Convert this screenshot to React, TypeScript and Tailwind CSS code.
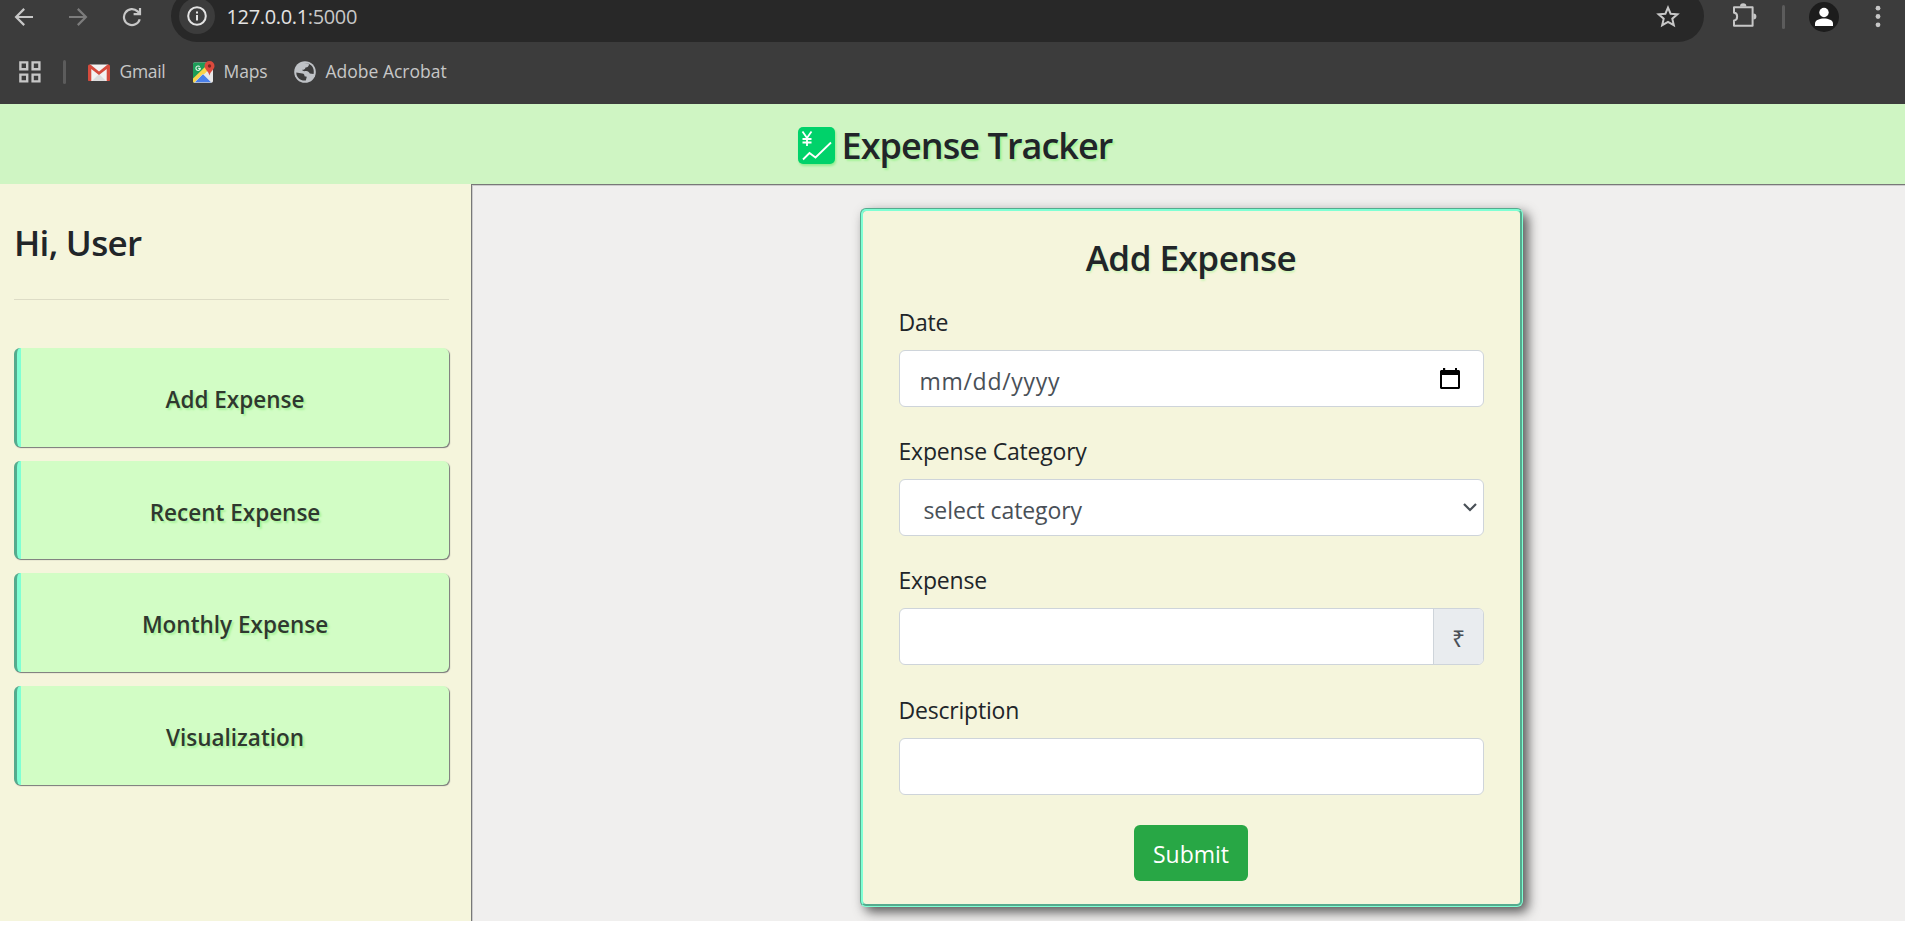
import type { ReactNode } from "react";

function ArrowIcon({ flip = false, color }: { flip?: boolean; color: string }) {
  return (
    <svg width="20" height="20" viewBox="0 0 20 20" fill="none" stroke={color} strokeWidth="2.2" className={flip ? "-scale-x-100" : ""}>
      <path d="M19 10H2.6M10.2 1.9 2.1 10l8.1 8.1" />
    </svg>
  );
}

function BrowserBar() {
  return (
    <div className="flex h-[104px] flex-col overflow-hidden bg-[#3c3c3c]">
      <div className="flex h-[42px] items-start">
        <div className="flex w-[171px] gap-[34px] pt-[6.500px] pl-[14px]">
          <ArrowIcon color="#c7c7c7" />
          <ArrowIcon flip color="#7c7c7c" />
          <svg width="20" height="20" viewBox="0 0 20 20" fill="none" stroke="#c7c7c7" strokeWidth="2.2">
            <path d="M17.7 12.2A8 8 0 1 1 15.600 4.400l2 2" />
            <path d="M18 .9v6.3h-6.4" />
          </svg>
        </div>
        <div className="-mt-[10px] flex h-[52px] w-[1533px] items-start rounded-full bg-[#282828]">
          <div className="mt-[8px] ml-[7.500px] flex h-[36px] w-[36px] items-center justify-center rounded-full bg-[#3c3c3c]">
            <svg width="20" height="20" viewBox="0 0 20 20" fill="none" stroke="#e3e3e3" strokeWidth="2">
              <circle cx="10" cy="10" r="8.800" />
              <path d="M10 9v5.600M10 5.400v2" />
            </svg>
          </div>
          <div className="mt-[13px] ml-[12px] text-[20px] leading-[28px] tracking-[-0.350px] whitespace-nowrap text-[#e3e3e3]">
            127.0.0.1<span className="text-[#c7c7c7]">:5000</span>
          </div>
          <svg className="mt-[15px] mr-[24px] ml-auto" width="24" height="23" viewBox="0 0 24 23" fill="none" stroke="#c7c7c7" strokeWidth="2">
            <path d="m12 2.600 2.600 6.100 6.800.600-5.100 4.400 1.500 6.500-5.800-3.400-5.800 3.400 1.500-6.500-5.100-4.400 6.800-.600z" />
          </svg>
        </div>
        <div className="flex flex-1 items-start">
          <svg className="mt-[3px] ml-[27px]" width="26" height="25" viewBox="0 0 26 25" fill="none" stroke="#c7c7c7" strokeWidth="2">
            <path d="M3 4.200h18.600v18.600H3v-5.400c4.200-.200 4.200-7.400 0-7.600z" strokeLinejoin="round" />
            <path d="M9 3.500a3.200 3.200 0 0 1 6.400 0zM22.400 10.500a3 3 0 0 1 0 6z" fill="#c7c7c7" stroke="none" />
          </svg>
          <div className="mt-[5px] ml-[25px] h-[24px] w-[3px] rounded-full bg-[#5c5c5c]" />
          <svg className="mt-[2px] ml-[24px]" width="30" height="30" viewBox="0 0 30 30">
            <circle cx="15" cy="15" r="15" fill="#1c1c1c" />
            <circle cx="15" cy="10.500" r="4.700" fill="#fff" />
            <path d="M6 24v-2.500c0-3.500 5-4.900 9-4.900s9 1.400 9 4.900V24z" fill="#fff" />
          </svg>
          <svg className="mt-[5px] ml-[36px]" width="6" height="23" viewBox="0 0 6 23" fill="#c7c7c7">
            <circle cx="3" cy="3.200" r="2.400" />
            <circle cx="3" cy="11.500" r="2.400" />
            <circle cx="3" cy="19.800" r="2.400" />
          </svg>
        </div>
      </div>
      <div className="flex h-[60px] items-center text-[17.500px] text-[#c7c7c7]">
        <svg className="ml-[19px]" width="22" height="22" viewBox="0 0 22 22" fill="none" stroke="#c7c7c7" strokeWidth="2.400">
          <path d="M1.400 1.400h6.800v6.800H1.400zM13.600 1.400h6.800v6.800h-6.800zM1.400 13.600h6.800v6.800H1.400zM13.600 13.600h6.800v6.800h-6.800z" />
        </svg>
        <div className="ml-[22px] h-[24px] w-[3px] rounded-full bg-[#5c5c5c]" />
        <svg className="ml-[22px]" width="22" height="17" viewBox="0 0 22 17">
          <path d="M2 .500h18V17H2z" fill="#f2f2f2" />
          <path d="M4 17 11 10l7 7z" fill="#dcdcdc" />
          <path d="M0 2C0 .500 1.800 0 3 .900l8 6.500 8-6.500c1.200-.900 3-.400 3 1.100v14c0 .600-.400 1-1 1h-2.300V5L11 11 3.300 5v12H1c-.600 0-1-.400-1-1z" fill="#d54b3d" />
        </svg>
        <div className="mb-[1px] ml-[9.500px] w-[73.500px] tracking-[-0.300px]">Gmail</div>
        <svg width="22" height="22" viewBox="0 0 22 22">
          <rect y="1.500" width="20" height="20" rx="1.500" fill="#e8e8e8" />
          <path d="M0 21V3c0-.800.700-1.500 1.500-1.500H14L17 6 1 21.500z" fill="#1d9d58" />
          <path d="M0 17.500 12.500 5.500l3.500 3L2.500 21.500H1c-.600 0-1-.600-1-1z" fill="#fbd44b" />
          <path d="m1.500 21.500 8.500-8.500 8.500 8.500z" fill="#4a80ea" stroke="#e8e8e8" strokeWidth=".500" />
          <path d="M16.500 0a5 5 0 0 1 5 5c0 3.500-4 5-5 9.500-1-4.500-5-6-5-9.500a5 5 0 0 1 5-5z" fill="#dc4a3d" />
          <circle cx="16.500" cy="5" r="1.700" fill="#7c2720" />
          <path d="M6.700 5.700a2.200 2.200 0 1 0 .600 1.700H5.200" fill="none" stroke="#e6f5ec" strokeWidth="1.100" />
        </svg>
        <div className="mb-[1px] ml-[8.500px] w-[70.500px] tracking-[-0.100px]">Maps</div>
        <svg width="22" height="22" viewBox="0 0 22 22">
          <circle cx="11" cy="11" r="10.800" fill="#bfc2c6" />
          <path d="M2.300 11.500 8.200 12.500c2 .300 2.400 1.200 2.300 2.700l2.300.600-1 3.700c-5.500.500-9.600-3.200-9.500-8zM10 2.500l5 .200c-.200 2.700-1 3.500-3.500 3.700-.500 2-1.500 2.400-3.300 2.300.500 1.500 1.800 1.600 3.400 1.300 2-.300 3.400.700 4.200 2.500l3.800.500c.900-4.600-1-8.500-4.600-10z" fill="#3c3c3c" />
        </svg>
        <div className="mb-[1px] ml-[9.500px]">Adobe Acrobat</div>
      </div>
    </div>
  );
}

function NavButton({ children }: { children: ReactNode }) {
  return (
    <button className="flex h-[98.500px] w-[435px] items-center justify-center rounded-[6px] border-l-[7px] border-l-[#7fffd4] bg-[#d2fdc5] pt-[5px] text-[22.500px] font-semibold text-[#2f382f] shadow-[1px_1px_1px_#777] [border-left-style:groove] [text-shadow:2px_2px_2px_#a9f39b]">
      {children}
    </button>
  );
}

function Field({ label, children }: { label: string; children?: ReactNode }) {
  return (
    <div className="flex h-[129.200px] flex-col">
      <label className="h-[44px] text-[23px] leading-[32px] tracking-[-0.200px] text-[#212529]">{label}</label>
      <div className="flex h-[57px] overflow-hidden rounded-[6px] border border-[#ced4da] bg-white text-[23px] text-[#495057]">{children}</div>
    </div>
  );
}

export default function App() {
  return (
    <div className="h-[929px] w-[1905px] overflow-hidden bg-white font-['Open_Sans',sans-serif]">
      <BrowserBar />
      <header className="flex h-[80px] items-center justify-center bg-[#cff5c3] pt-[4px] pl-[5px]">
        <svg className="mb-[2px] drop-shadow-[1px_2px_1px_#90ee90]" width="37" height="37" viewBox="0 0 37 37" fill="none" stroke="#fff" strokeWidth="1.800">
          <rect width="37" height="37" rx="5" fill="#00d26a" stroke="none" />
          <path d="M4.500 4.500 9 11l4.500-6.500M9 11v8M4.500 12h9M4.500 15.500h9M5 32.500l6.500-6.500 6 4.500L33 15.500" />
        </svg>
        <h1 className="ml-[7px] text-[36px] font-semibold tracking-[-0.950px] text-[#212529] [text-shadow:2px_2px_2px_#a9f39b]">Expense Tracker</h1>
      </header>
      <div className="flex h-[737px]">
        <aside className="w-[471px] bg-[#f5f5dc] pl-[14px]">
          <h2 className="flex h-[115px] items-center pt-[4px] text-[35px] font-semibold tracking-[-0.700px] text-[#212529]">Hi, User</h2>
          <div className="h-px w-[435px] bg-[#dddcc6]" />
          <nav className="flex flex-col gap-[14.200px] pt-[48px]">
            <NavButton>Add Expense</NavButton>
            <NavButton>Recent Expense</NavButton>
            <NavButton>Monthly Expense</NavButton>
            <NavButton>Visualization</NavButton>
          </nav>
        </aside>
        <main className="flex flex-1 justify-center overflow-hidden border-t-2 border-l-2 border-[#ccc] bg-[#f0efee] pt-[22px] pl-[4px] [border-style:groove]">
          <section className="flex h-[699px] w-[663px] flex-col rounded-[6px] border-[3px] border-[#7fffd4] bg-[#f5f5dc] px-[36px] shadow-[5px_5px_12px_#555] [border-style:groove]">
            <h2 className="pt-[22px] text-center text-[35px] leading-[50px] font-semibold tracking-[-0.500px] text-[#212529] [text-shadow:1px_2px_2px_#d3f5bb]">Add Expense</h2>
            <div className="mt-[23px]">
              <Field label="Date">
                <span className="ml-[20px] leading-[60px] tracking-[0.700px]">mm/dd/yyyy</span>
                <svg className="mt-[17px] mr-[23px] ml-auto" width="20" height="21" viewBox="0 0 20 21">
                  <path d="M3 0h2.200v2H15V0h2v2h1.500c.800 0 1.500.700 1.500 1.500v16c0 .800-.700 1.500-1.500 1.500h-17C.700 21 0 20.300 0 19.500v-16C0 2.700.700 2 1.500 2H3zM2 7v12h16V7z" fillRule="evenodd" />
                </svg>
              </Field>
              <Field label="Expense Category">
                <span className="ml-[24px] leading-[60px] tracking-[-0.100px]">select category</span>
                <svg className="mt-[23px] mr-[6px] ml-auto" width="14" height="9" viewBox="0 0 14 9" fill="none" stroke="#495057" strokeWidth="2.200">
                  <path d="m1 1 6 6 6-6" />
                </svg>
              </Field>
              <Field label="Expense">
                <span className="ml-auto w-[50px] border-l border-[#ced4da] bg-[#e9ecef] text-center leading-[59px] font-medium">₹</span>
              </Field>
              <Field label="Description" />
            </div>
            <button className="mt-[2px] h-[56px] w-[114px] self-center rounded-[6px] bg-[#28a745] pt-[2px] text-[23px] text-white">Submit</button>
          </section>
        </main>
      </div>
    </div>
  );
}
